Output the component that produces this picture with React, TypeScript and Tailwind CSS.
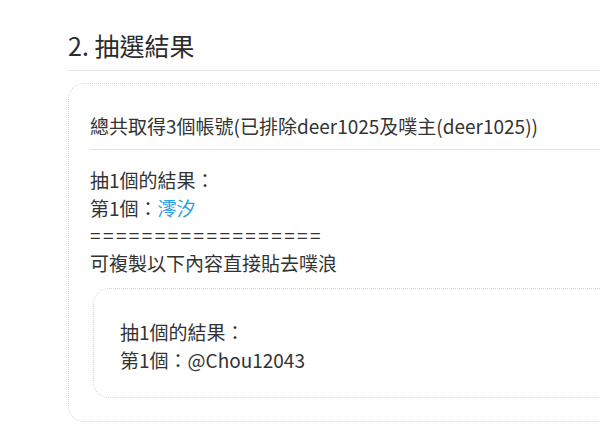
const font = { fontFamily: '"Noto Sans CJK TC", "Noto Sans", sans-serif' }

const resultLines = ['抽1個的結果：']

export default function App() {
  return (
    <div className="h-[432px] w-[600px] overflow-hidden bg-white text-[#333]" style={font}>
      <div className="pl-[68px] pt-[30px]">
        <h2 className="border-b border-[#e5e5e5] pb-[9px] text-[25px] leading-[31px] font-normal text-[#2b2b2b]">
          2. 抽選結果
        </h2>

        <div className="mt-[12px] w-[600px] rounded-2xl border border-dotted border-[#d4d4d4] px-[21px] pb-[23px]">
          <div className="border-b border-[#e3e3e3] pt-[28px] pb-[10px] text-[19px] leading-[27px]">
            總共取得3個帳號(已排除deer1025及噗主(deer1025))
          </div>

          <div className="pt-[16px] text-[19px] leading-[27.5px]">
            {resultLines.map((line) => (
              <div key={line}>{line}</div>
            ))}
            <div>
              第1個：<span className="text-[#2d9fe0]">澪汐</span>
            </div>
            <div className="tracking-[2.4px]">==================</div>
            <div>可複製以下內容直接貼去噗浪</div>
          </div>

          <div className="mt-[12px] ml-[3px] rounded-2xl border border-dotted border-[#d4d4d4] pt-[29px] pb-[24px] pl-[26px] text-[19px] leading-[27.5px]">
            <div>抽1個的結果：</div>
            <div>第1個：@Chou12043</div>
          </div>
        </div>
      </div>
    </div>
  )
}
